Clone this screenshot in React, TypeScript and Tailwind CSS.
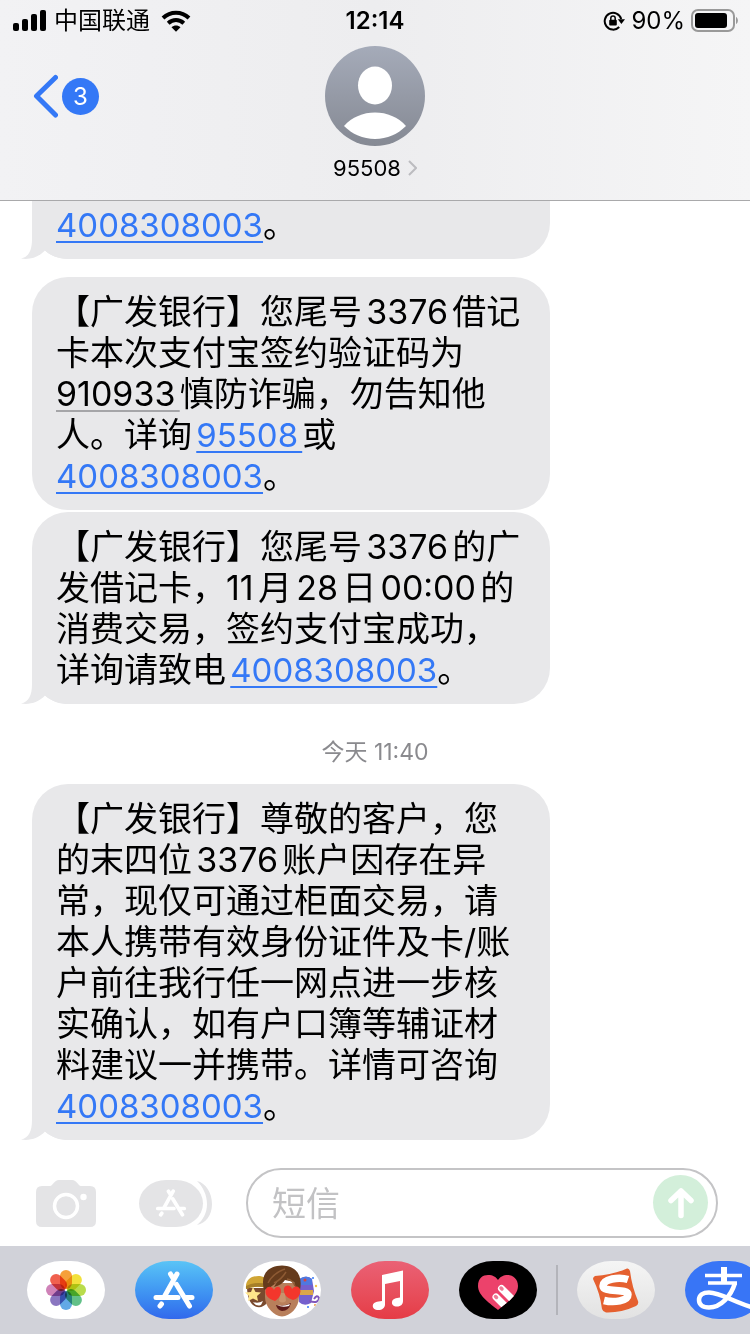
import type { ReactNode } from "react";

const FONT = "font-['Inter','Noto_Sans_CJK_SC',sans-serif]";

function PhoneLink({ number }: { number: string }) {
  return (
    <a
      href={`tel:${number}`}
      className="text-[33px] leading-none text-[#3478f6] underline decoration-2 underline-offset-4"
    >
      {number}
    </a>
  );
}

/** Small curl at the bottom-left corner of the last bubble in a group. */
function BubbleTail() {
  return (
    <svg
      width="55"
      height="40"
      viewBox="0 0 55 40"
      className="absolute bottom-0 -left-[11px] text-[#e8e8ea]"
      fill="currentColor"
      aria-hidden="true"
    >
      <path d="M11 0V20C11 31 8 38 0 39.5C9 41 18 38 24 31.5C31 37.5 38 40 48 40H55V0Z" />
    </svg>
  );
}

type BubbleProps = {
  lines: ReactNode[];
  tail?: boolean;
  cut?: boolean;
};

function Bubble({ lines, tail, cut }: BubbleProps) {
  return (
    <div
      className={
        cut
          ? "relative w-[75.5%] rounded-b-[36px] bg-[#e8e8ea] px-6 pt-[3px] pb-[14px]"
          : "relative w-[75.5%] rounded-[36px] bg-[#e8e8ea] px-6 py-[14px]"
      }
    >
      {tail && <BubbleTail />}
      <p className="relative text-[34px] leading-[41px] whitespace-nowrap text-black [text-autospace:normal]">
        {lines.map((line, i) => (
          <span key={i} className="block">
            {line}
          </span>
        ))}
      </p>
    </div>
  );
}

function StatusBar() {
  return (
    <div className="grid h-10 grid-cols-3 items-center px-3 pt-[2px] text-[24px] leading-6 text-black">
      <div className="flex items-center gap-2">
        <svg width="34" height="22" viewBox="0 0 34 22" aria-hidden="true">
          <rect x="1" y="13" width="6" height="8" rx="2" />
          <rect x="10" y="9" width="6" height="12" rx="2" />
          <rect x="19" y="4" width="6" height="17" rx="2" />
          <rect x="28" y="0" width="6" height="21" rx="2" />
        </svg>
        <span>中国联通</span>
        <svg width="32" height="22" viewBox="0 0 32 22" className="ml-[2px]" aria-hidden="true">
          <g fill="none" stroke="#000" strokeWidth="4">
            <path d="M3 8C10.5 0.9 21.5 0.9 29 8" />
            <path d="M8.2 13.3C12.8 9 19.2 9 23.8 13.3" />
          </g>
          <path d="M11.5 17.2C14 14.9 18 14.9 20.5 17.2L16 21.8Z" />
        </svg>
      </div>
      <span className="text-center font-semibold">12:14</span>
      <div className="flex items-center justify-end gap-[6px]">
        <svg width="22" height="22" viewBox="0 0 22 22" aria-hidden="true">
          <g fill="none" stroke="#000">
            <path d="M18.2 9A8.4 8.4 0 1 0 16.2 17" strokeWidth="2" />
            <path d="M7.8 10V8.2A2.2 2.2 0 0 1 12.2 8.2V10" strokeWidth="1.5" />
          </g>
          <path d="M14.8 9.2H22L18.4 14Z" />
          <rect x="6.2" y="9.8" width="7.6" height="5.8" rx="1" />
        </svg>
        <span>90%</span>
        <svg width="47" height="24" viewBox="0 0 47 24" aria-hidden="true">
          <rect x="1" y="1" width="42" height="21" rx="6" fill="none" stroke="#999" strokeWidth="2" />
          <rect x="4" y="4" width="32" height="15" rx="3" />
          <path d="M45 8C47.5 9 47.5 14 45 15Z" fill="#999" />
        </svg>
      </div>
    </div>
  );
}

function Header() {
  return (
    <header className="border-b border-[#a9a9ab] bg-linear-to-r from-[#f2f2f4] via-[#ededef] to-[#f5f5f6]">
      <StatusBar />
      <div className="grid h-40 grid-cols-3 items-start px-8 pt-[6px]">
        <button type="button" aria-label="返回" className="flex h-[100px] items-center gap-1 text-[#3478f6]">
          <svg width="26" height="44" viewBox="0 0 26 44" fill="none" aria-hidden="true">
            <path
              d="M23.5 3.5L4.5 22L23.5 41"
              stroke="currentColor"
              strokeWidth="5"
              strokeLinecap="round"
              strokeLinejoin="round"
            />
          </svg>
          <span className="flex size-[37px] items-center justify-center rounded-full bg-[#3478f6] pt-[2px] text-[24px] leading-6 text-white">
            3
          </span>
        </button>
        <button type="button" className="flex flex-col items-center gap-2">
          <svg width="100" height="100" viewBox="0 0 100 100" aria-hidden="true">
            <defs>
              <linearGradient id="avatar" x1="0" y1="0" x2="0" y2="1">
                <stop offset="0" stopColor="#a5abb9" />
                <stop offset="1" stopColor="#858993" />
              </linearGradient>
            </defs>
            <circle cx="50" cy="50" r="50" fill="url(#avatar)" />
            <ellipse cx="50" cy="39.5" rx="17" ry="19" fill="#fff" />
            <path d="M19 80C27 71 38 66.5 50 66.5S73 71 81 80C73 88 62 93 50 93S27 88 19 80Z" fill="#fff" />
          </svg>
          <span className="flex items-center gap-[7px] text-[22px] leading-7 text-black">
            95508
            <svg width="9" height="16" viewBox="0 0 9 16" fill="none" aria-hidden="true">
              <path d="M1 1L8 8L1 15" stroke="#bcbcc0" strokeWidth="2" />
            </svg>
          </span>
        </button>
      </div>
    </header>
  );
}

/** The crossed strokes of the store logo, on a 42x38 canvas. */
function StoreMark({ className }: { className: string }) {
  return (
    <svg
      viewBox="0 0 42 38"
      className={className}
      fill="none"
      stroke="currentColor"
      strokeWidth="5"
      strokeLinecap="round"
      aria-hidden="true"
    >
      <path d="M17.5 3L20.5 8M24 3L12 24.5" />
      <path d="M23.5 13.5L36.5 35" />
      <path d="M3 26.5H25M33.5 26.5H39" />
      <path d="M8.5 33L7 35" />
    </svg>
  );
}

function Composer() {
  return (
    <form className="flex items-center px-8 pb-2" onSubmit={(e) => e.preventDefault()}>
      <button type="button" aria-label="相机" className="ml-1 shrink-0">
        <svg width="60" height="47" viewBox="0 0 60 47" aria-hidden="true">
          <path
            d="M6 6H14C17 6 18 0 23 0H36C41 0 42 6 45 6H54Q60 6 60 12V41Q60 47 54 47H6Q0 47 0 41V12Q0 6 6 6Z"
            fill="#e4e4e6"
          />
          <circle cx="30" cy="26" r="11.5" fill="none" stroke="#fff" strokeWidth="3.5" />
          <circle cx="47.5" cy="17" r="3.2" fill="#fff" />
        </svg>
      </button>
      <button type="button" aria-label="应用" className="relative ml-[43px] shrink-0">
        <svg width="73" height="47" viewBox="0 0 73 47" aria-hidden="true">
          <path d="M58 1C67 3 73 13 73 24S67 43 58 45C64 40 68 33 68 24S64 7 58 1Z" fill="#e4e4e6" />
          <rect x="0" y="0" width="64" height="47" rx="27" ry="23.5" fill="#e4e4e6" />
        </svg>
        <StoreMark className="absolute top-[9px] left-4 h-7 w-8 text-white" />
      </button>
      <div className="relative ml-[34px] flex-1">
        <input
          type="text"
          aria-label="短信"
          placeholder="短信"
          className="h-[70px] w-full rounded-full border-2 border-[#c4c4c6] bg-white px-6 text-[34px] text-black outline-none placeholder:text-[#c2c2c4]"
        />
        <button
          type="submit"
          aria-label="发送"
          className="absolute top-[7px] right-[10px] flex size-[55px] items-center justify-center rounded-full bg-[#d3efda]"
        >
          <svg
            width="28"
            height="34"
            viewBox="0 0 28 34"
            fill="none"
            stroke="#fff"
            strokeWidth="5.5"
            strokeLinecap="round"
            strokeLinejoin="round"
            aria-hidden="true"
          >
            <path d="M14 29.5V5M4 14.5L14 5L24 14.5" />
          </svg>
        </button>
      </div>
    </form>
  );
}

const PETALS = [
  "#f6a03a",
  "#f2e13c",
  "#b9dc4c",
  "#62c088",
  "#62a9e6",
  "#8a76c0",
  "#cf82b8",
  "#f0604e",
];

function PhotosIcon() {
  return (
    <svg viewBox="0 0 78 58" className="size-full" aria-hidden="true">
      {PETALS.map((color, i) => (
        <rect
          key={color}
          x="33"
          y="9"
          width="12"
          height="19"
          rx="6"
          fill={color}
          transform={`rotate(${i * 45} 39 29)`}
          className="mix-blend-multiply"
        />
      ))}
    </svg>
  );
}

function MemojiIcon() {
  return (
    <svg viewBox="0 0 78 58" className="size-full" aria-hidden="true">
      <path d="M4 27H24V42Q20 47 14 46Q5 44 4 27Z" fill="#7a4a2e" />
      <path d="M3 28C2 18 9 14.5 17 15L24 17V27Q13 24 3 28Z" fill="#d0a535" />
      <path d="M3 28Q13 24 24 27V23Q12 20 3 25Z" fill="#a67f28" />
      <path d="M10 26L12.5 31L18 31.5L14 35L15 40L10 37.5L5 40L6 35L2 31.5L8 31Z" fill="#ffe58a" />
      <path d="M10 41Q15 43 20 40L18 44Q13 46 10 41Z" fill="#fff" />

      <path d="M56 19Q63 13 69 18L71 30L68 42Q61 46 56 41Z" fill="#7560cd" />
      <path d="M56 18Q63 13 69 18V24H56Z" fill="#4f78e0" />
      <circle cx="62" cy="19" r="1.5" fill="#d8433c" />
      <path d="M57 29H70V34H57Z" fill="#dba548" />
      <path d="M66 40Q76 43 76 37Q74 33 71 38" fill="none" stroke="#8057bb" strokeWidth="2" />
      <circle cx="70" cy="17" r="1" fill="#3478f6" />
      <circle cx="73" cy="25" r="1.2" fill="#f3c64c" />
      <circle cx="65" cy="46" r="1" fill="#3478f6" />
      <circle cx="72" cy="44" r="1" fill="#f3943c" />

      <path d="M22 22H56V36C56 47 47 55 39 55.5C31 55 22 46 22 36Z" fill="#b87f5b" />
      <path d="M37 32H42L43 40Q39.5 43 36 40Z" fill="#c8936d" />
      <path d="M21 29C17 13 25 5 39 4.500C53 5 60 14 57 29L54 31L51 21L42 19Q39 24 31 26L34 21Q29 26 21 29Z" fill="#653b1c" />
      <path d="M25 22Q30 12 42 8M31 22Q38 19 43 11M44 18Q50 19 52 25" fill="none" stroke="#8d5a33" strokeWidth="1.5" />
      <path d="M32 40C25 38 21 33 23 28C25 24 30 26 31 29C33 24 38 25 38 30C38 35 35 38 32 40Z" fill="#f3362c" />
      <path d="M50 39C43 37 40 32 41 27C43 23 48 24 49 28C52 24 57 25 57.5 30C57 35 54 38 50 39Z" fill="#f3362c" />
      <path d="M33 44Q40 46 48 42Q46 50 39 50Q34 49 33 44Z" fill="#5e1d1a" />
      <path d="M34 44Q40 46 47 43L46 45Q39 47 34 44Z" fill="#fff" />
    </svg>
  );
}

function MusicIcon() {
  return (
    <svg viewBox="0 0 78 58" className="size-full" fill="#fff" aria-hidden="true">
      <path d="M31 14L52 9.5V40C52 43 50 45.5 46 45.5C42.5 45.5 40.5 43.5 41 41C41.5 37.5 45 37 49 36.5V20L34 23V43.5C34 47 31 49 27.5 49C23.5 49 21.5 47 21.8 44.5C22.3 41 26 40.5 31 40Z" />
    </svg>
  );
}

function TouchIcon() {
  return (
    <svg viewBox="0 0 78 58" className="size-full" aria-hidden="true">
      <defs>
        <clipPath id="heart">
          <path d="M39 49C32 43 19 35 19 25C19 17 24 14 29 14C34 14 37 16 39 19C41 16 44 14 49 14C54 14 59 18 59 25C59 35 46 43 39 49Z" />
        </clipPath>
      </defs>
      <g clipPath="url(#heart)">
        <rect width="78" height="58" fill="#ec426b" />
        <g stroke="#fff" strokeWidth="7" strokeLinecap="round">
          <path d="M42.5 27.5L60 45" />
          <path d="M37 36L55 54" />
        </g>
        <g stroke="#ee7d97" strokeWidth="3.5" strokeLinecap="round">
          <path d="M42 27L43 28" />
          <path d="M36.5 35.5L37.5 36.5" />
        </g>
      </g>
    </svg>
  );
}

function SogouIcon() {
  return (
    <svg viewBox="0 0 78 58" className="size-full" aria-hidden="true">
      <path
        d="M18 15Q35 14 50 7.5Q52 7 53 10Q55 26 61 40Q62 43 59 45Q44 52 29 51.5Q26 51 25 48Q23 32 16 18Q16 16 18 15Z"
        fill="#e5602f"
      />
      <path
        d="M51 18.5C42 15.5 26 18 26 25C26 32 51 27 51 33.5C51 40 37 42 27 39.5"
        fill="none"
        stroke="#fff"
        strokeWidth="7.5"
      />
    </svg>
  );
}

function AlipayIcon() {
  return (
    <svg viewBox="0 0 78 58" className="size-full" fill="none" stroke="#fff" aria-hidden="true">
      <path d="M20 14.5H57M23 22H52" strokeWidth="3.5" />
      <path d="M39 6V22" strokeWidth="6" />
      <path
        d="M50 22C46 35 36 46.5 24 46.5C17 46.5 14 43 14 39C14 34 18 31.5 24 31.5C36 31.5 50 42 70 47"
        strokeWidth="4.5"
      />
    </svg>
  );
}

type DrawerApp = {
  name: string;
  background: string;
  icon: ReactNode;
};

const RECENT_APPS: DrawerApp[] = [
  { name: "照片", background: "bg-white", icon: <PhotosIcon /> },
  {
    name: "App Store",
    background: "bg-linear-to-b from-[#5ac4f6] to-[#3268ec]",
    icon: <StoreMark className="h-[38px] w-[42px] text-white" />,
  },
  { name: "拟我表情", background: "bg-white", icon: <MemojiIcon /> },
  { name: "音乐", background: "bg-linear-to-b from-[#ea6175] to-[#e53c46]", icon: <MusicIcon /> },
  { name: "Digital Touch", background: "bg-black", icon: <TouchIcon /> },
];

const OTHER_APPS: DrawerApp[] = [
  { name: "搜狗输入法", background: "bg-linear-to-b from-[#f5f5f5] to-[#e2e2e2]", icon: <SogouIcon /> },
  { name: "支付宝", background: "bg-[#3875f6]", icon: <AlipayIcon /> },
];

function DrawerButton({ app }: { app: DrawerApp }) {
  return (
    <button
      type="button"
      aria-label={app.name}
      className={`flex h-[58px] w-[78px] shrink-0 items-center justify-center overflow-hidden rounded-[34px/29px] ${app.background}`}
    >
      {app.icon}
    </button>
  );
}

function AppDrawer() {
  return (
    <nav className="flex h-[88px] items-center overflow-hidden bg-[#d1d2d9] pl-[27px]">
      <div className="flex gap-[30px]">
        {RECENT_APPS.map((app) => (
          <DrawerButton key={app.name} app={app} />
        ))}
      </div>
      <div className="mx-[19px] h-[50px] w-[2px] shrink-0 bg-[#b3b4ba]" />
      <div className="flex gap-[30px]">
        {OTHER_APPS.map((app) => (
          <DrawerButton key={app.name} app={app} />
        ))}
      </div>
    </nav>
  );
}

export default function App() {
  return (
    <div className={`flex min-h-screen flex-col overflow-hidden bg-white ${FONT}`}>
      <Header />
      <main className="flex flex-1 flex-col px-8 pb-7">
        <Bubble
          cut
          tail
          lines={[
            <>
              <PhoneLink number="4008308003" />。
            </>,
          ]}
        />
        <div className="mt-[18px] flex flex-col gap-[2px]">
          <Bubble
            lines={[
              "【广发银行】您尾号3376借记",
              "卡本次支付宝签约验证码为",
              <>
                <span className="underline decoration-[#a5a5a8] decoration-2 underline-offset-4">910933</span>
                慎防诈骗，勿告知他
              </>,
              <>
                人。详询
                <PhoneLink number="95508" />或
              </>,
              <>
                <PhoneLink number="4008308003" />。
              </>,
            ]}
          />
          <Bubble
            tail
            lines={[
              "【广发银行】您尾号3376的广",
              "发借记卡，11月28日00:00的",
              "消费交易，签约支付宝成功，",
              <>
                详询请致电
                <PhoneLink number="4008308003" />。
              </>,
            ]}
          />
        </div>
        <p className="mt-[33px] mb-[17px] text-center text-[23px] leading-[30px] text-[#8a8a8e]">今天 11:40</p>
        <Bubble
          tail
          lines={[
            "【广发银行】尊敬的客户，您",
            "的末四位3376账户因存在异",
            "常，现仅可通过柜面交易，请",
            "本人携带有效身份证件及卡/账",
            "户前往我行任一网点进一步核",
            "实确认，如有户口簿等辅证材",
            "料建议一并携带。详情可咨询",
            <>
              <PhoneLink number="4008308003" />。
            </>,
          ]}
        />
      </main>
      <Composer />
      <AppDrawer />
    </div>
  );
}
